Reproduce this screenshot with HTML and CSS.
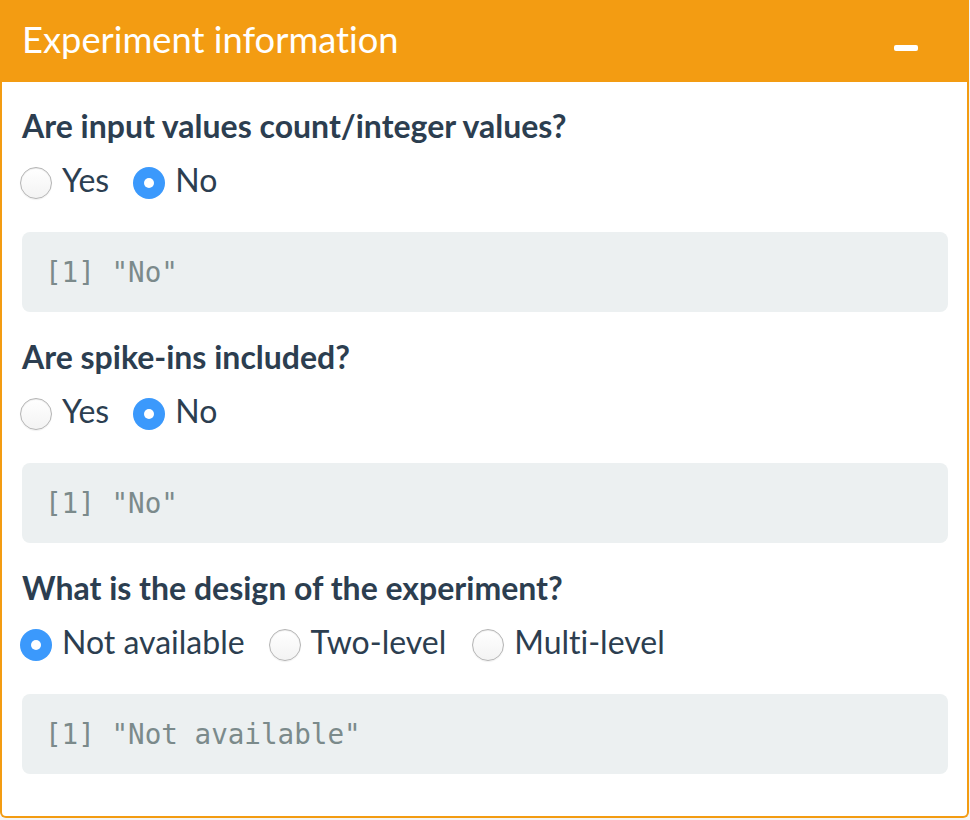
FILE: index.html
```html
<!DOCTYPE html>
<html>
<head>
<meta charset="utf-8">
<link rel="stylesheet" href="styles.css">
</head>
<body>
<div class="box">
  <div class="box-header">
    <h3 class="box-title">Experiment information</h3>
    <span class="tool" aria-label="collapse"></span>
  </div>
  <div class="box-body">
    <div class="group">
      <div class="q">Are input values count/integer values?</div>
      <div class="radios">
        <span class="opt"><span class="dot"></span><span class="txt">Yes</span></span>
        <span class="opt"><span class="dot on"></span><span class="txt">No</span></span>
      </div>
      <pre class="out">[1] "No"</pre>
    </div>
    <div class="group">
      <div class="q">Are spike-ins included?</div>
      <div class="radios">
        <span class="opt"><span class="dot"></span><span class="txt">Yes</span></span>
        <span class="opt"><span class="dot on"></span><span class="txt">No</span></span>
      </div>
      <pre class="out">[1] "No"</pre>
    </div>
    <div class="group last">
      <div class="q">What is the design of the experiment?</div>
      <div class="radios">
        <span class="opt"><span class="dot on"></span><span class="txt">Not available</span></span>
        <span class="opt"><span class="dot"></span><span class="txt">Two-level</span></span>
        <span class="opt"><span class="dot"></span><span class="txt">Multi-level</span></span>
      </div>
      <pre class="out">[1] "Not available"</pre>
    </div>
  </div>
</div>
</body>
</html>
```
FILE: styles.css
```css
html, body {
  margin: 0;
  padding: 0;
  background: #f4f5f6;
}
body {
  font-family: Lato, "Open Sans", sans-serif;
  font-variant-ligatures: none;
  color: #2c3e50;
  width: 970px;
  height: 820px;
  overflow: hidden;
}
.box {
  width: 969px;
  height: 818px;
  box-sizing: border-box;
  background: #fff;
  border: 2px solid #f39c12;
  border-top: 0;
  border-radius: 0 0 6px 6px;
}
.box-header {
  display: flex;
  align-items: flex-start;
  background: #f39c12;
  color: #fff;
  margin: 0 -2px;
  padding: 19px 0 23px 22px;
}
.box-title {
  margin: 0;
  font-size: 36.3px;
  font-weight: 400;
  line-height: 40px;
}
.tool {
  margin-left: auto;
  margin-right: 51px;
  margin-top: 26px;
  width: 24px;
  height: 6px;
  border-radius: 2px;
  background: #fff;
}
.box-body {
  padding: 23px 19px 0 20px;
}
.group {
  margin-bottom: 24px;
}
.q {
  font-size: 32px;
  font-weight: 700;
  line-height: 42px;
}
.radios {
  display: flex;
  gap: 24px;
  margin-top: 12px;
  margin-left: -2px;
}
.opt {
  display: flex;
  align-items: flex-start;
  gap: 10px;
}
.opt + .opt + .opt {
  margin-left: 2px;
}
.txt {
  font-size: 32px;
  line-height: 42px;
}
.dot {
  width: 32px;
  height: 32px;
  box-sizing: border-box;
  margin-top: 8px;
  border-radius: 50%;
  border: 1px solid #b5b5b5;
  background: linear-gradient(#ffffff, #f3f3f3);
  box-shadow: inset 0 1px 1px rgba(0,0,0,0.08), 0 1px 1px rgba(0,0,0,0.06);
  position: relative;
}
.dot.on {
  border: 0;
  background: #3b99fc;
  box-shadow: none;
}
.dot.on::after {
  content: "";
  position: absolute;
  left: 11px;
  top: 11px;
  width: 10px;
  height: 10px;
  border-radius: 50%;
  background: #fff;
}
.out {
  margin: 31px 0 0 0;
  height: 80px;
  box-sizing: border-box;
  padding: 21px 23px 19px;
  background: #ecf0f1;
  border-radius: 8px;
  color: #7b8a8b;
  font-family: "DejaVu Sans Mono", "Liberation Mono", monospace;
  font-size: 27.6px;
  line-height: 40px;
  white-space: pre;
}
```
